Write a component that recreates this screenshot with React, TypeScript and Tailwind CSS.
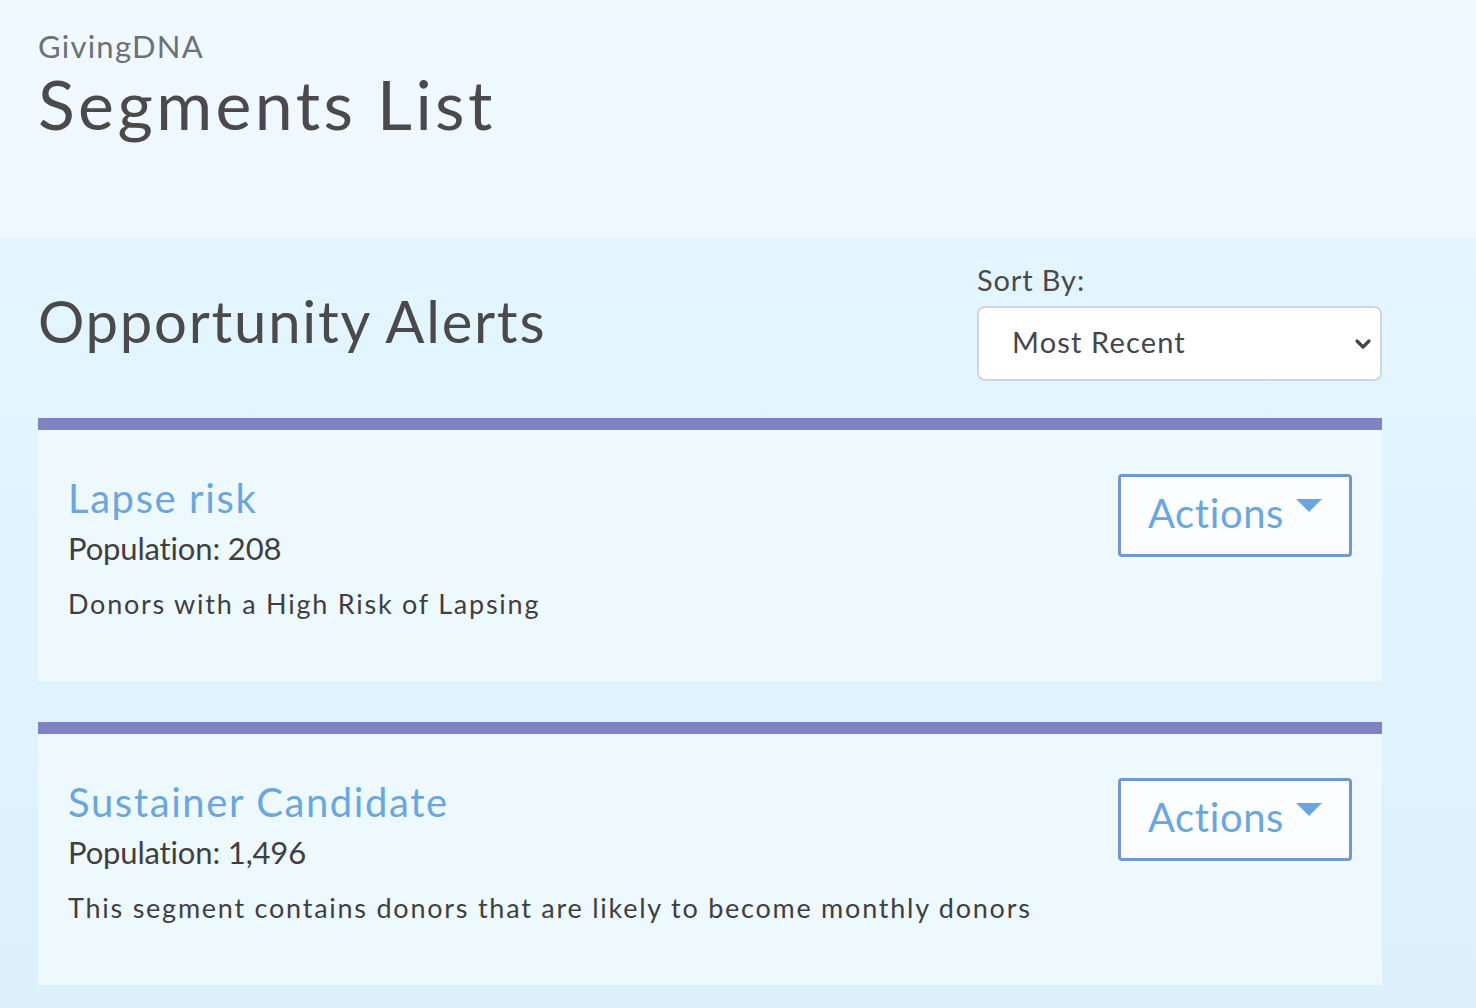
import React from "react";

function Card({ title, population, desc }: { title: string; population: string; desc: string }) {
  return (
    <div className="w-[1344px] border-t-[12px] border-[#7f82c3] bg-[#eff9fe]/90 h-[263px] flex justify-between pl-[30px] pr-[30px]">
      <div className="pt-[44px]">
        <div className="text-[40px] leading-[48px] text-[#6aa7dc] tracking-[0.04em]">{title}</div>
        <div className="text-[31px] leading-[40px] text-[#3f3f42] tracking-[-0.005em] mt-[6px]">Population: {population}</div>
        <div className="text-[27px] leading-[40px] text-[#3f3f42] tracking-[0.065em] mt-[16px]">{desc}</div>
      </div>
      <div className="pt-[44px]">
        <button className="w-[234px] h-[83px] border-[3px] border-[#7396d4] rounded-[4px] bg-[#fbfdff] flex items-center justify-center gap-[12px] text-[40px] text-[#6aa7dc] tracking-[0.015em] pb-[6px]">
          <span>Actions</span>
          <svg width="26" height="14" viewBox="0 0 26 14" className="mb-[14px]"><polygon points="0,0 26,0 13,13" fill="#6aa7dc" /></svg>
        </button>
      </div>
    </div>
  );
}

export default function App() {
  return (
    <div className="w-[1476px] h-[1008px] overflow-hidden bg-gradient-to-br from-[#f1f9fe] to-[#d8eefb]" style={{ fontFamily: "Lato, 'Open Sans', sans-serif" }}>
      <div className="h-[238px] bg-gradient-to-b from-[#f0f9fe] to-[#eef8fe] pl-[38px] pt-[26px]">
        <div className="text-[31px] leading-[40px] text-[#6b7079] tracking-[0.04em]">GivingDNA</div>
        <div className="text-[68px] leading-[80px] text-[#4a4a4d] tracking-[0.05em] -mt-[2px]">Segments List</div>
      </div>
      <div className="bg-gradient-to-b from-[#e4f5fe] to-[#dcf1fc] h-[770px] pl-[38px]">
        <div className="w-[1344px] flex justify-between items-end pt-[24px] h-[180px]">
          <div className="text-[58px] leading-[70px] text-[#4a4a4d] tracking-[0.03em] pb-[62px]">Opportunity Alerts</div>
          <div className="w-[405px] pb-[37px]">
            <div className="text-[29px] leading-[36px] text-[#4a4a4d] tracking-[0.03em] mb-[8px]">Sort By:</div>
            <div className="h-[75px] bg-white border-2 border-[#d2d6dc] rounded-[8px] flex items-center justify-between pl-[33px] pr-[8px]">
              <span className="text-[29px] text-[#44464b] tracking-[0.04em] -mt-[4px]">Most Recent</span>
              <svg width="18" height="12" viewBox="0 0 18 12"><path d="M3 3 L9 9 L15 3" stroke="#44464b" strokeWidth="3.2" fill="none" strokeLinecap="round" strokeLinejoin="round" /></svg>
            </div>
          </div>
        </div>
        <div className="flex flex-col gap-[41px]">
          <Card title="Lapse risk" population="208" desc="Donors with a High Risk of Lapsing" />
          <Card title="Sustainer Candidate" population="1,496" desc="This segment contains donors that are likely to become monthly donors" />
        </div>
      </div>
    </div>
  );
}
